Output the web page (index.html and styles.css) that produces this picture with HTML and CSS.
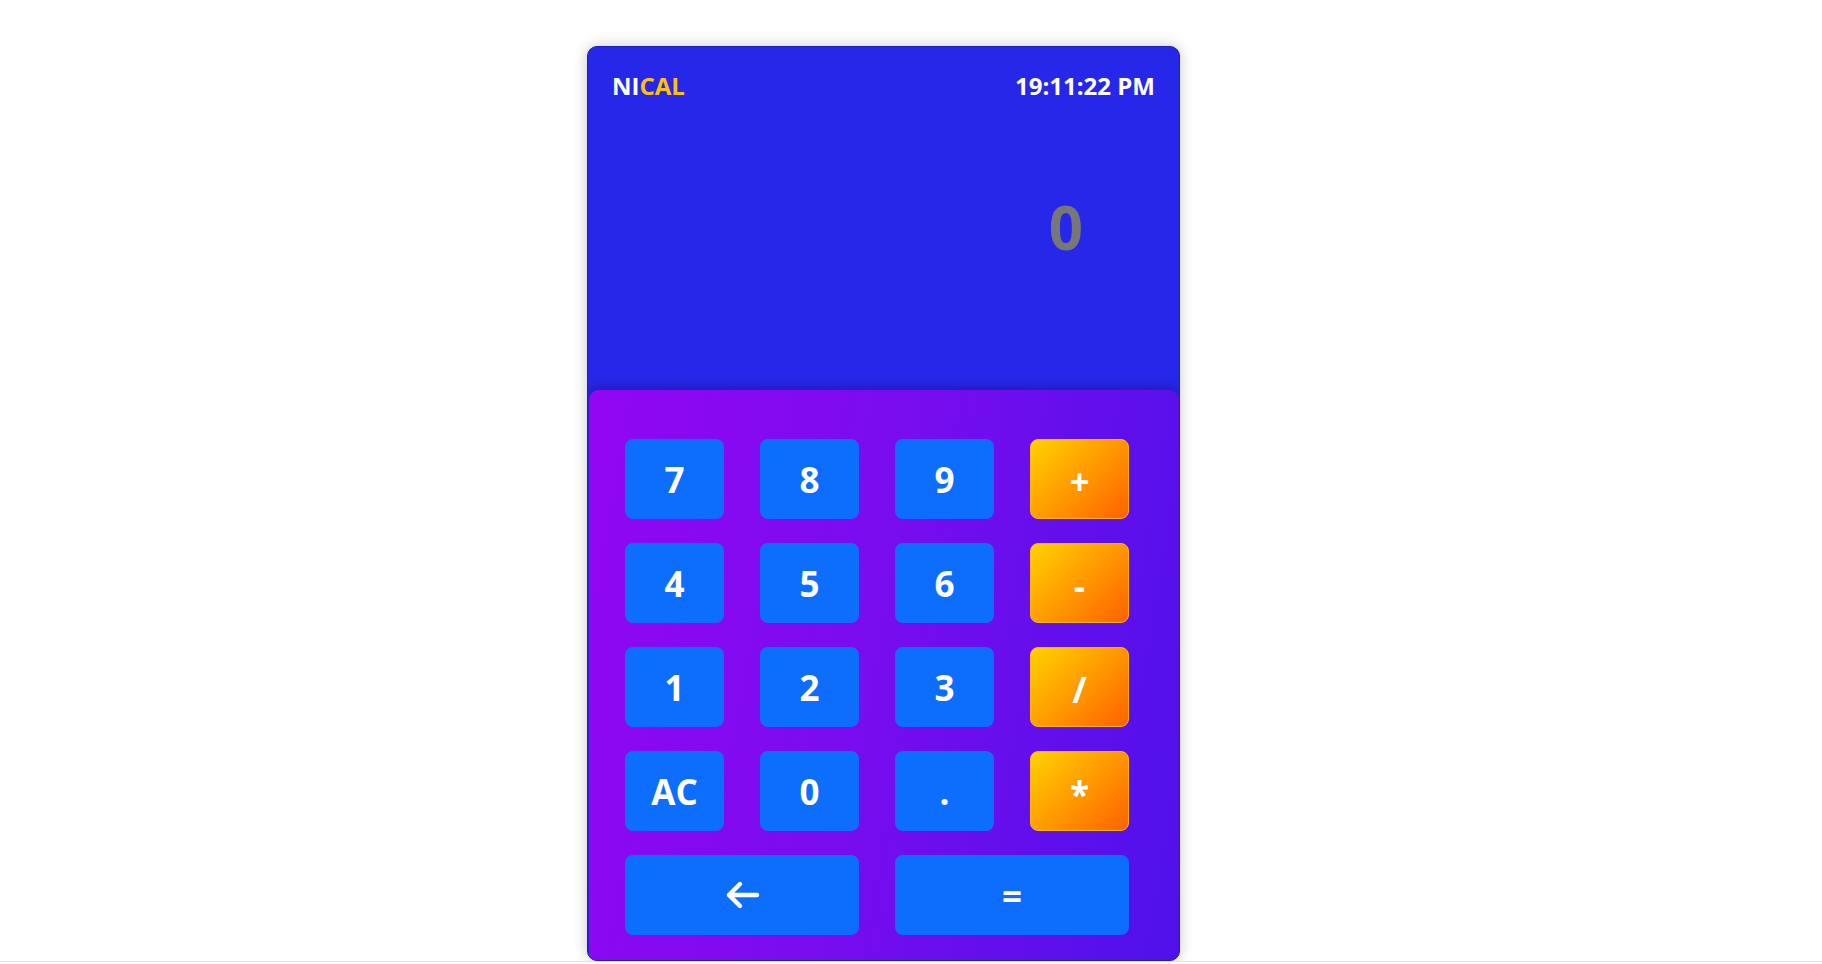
FILE: index.html
```html
<!DOCTYPE html>
<html lang="en">
<head>
<meta charset="utf-8">
<title>NICAL</title>
<link rel="stylesheet" href="styles.css">
</head>
<body>
<div class="page">
  <div class="calc">
    <div class="screen">
      <div class="top">
        <div class="brand">NI<span class="brand-accent">CAL</span></div>
        <div class="time">19:11:22 PM</div>
      </div>
      <div class="result">0</div>
    </div>
    <div class="keypad">
      <button class="key">7</button>
      <button class="key">8</button>
      <button class="key">9</button>
      <button class="key op">+</button>
      <button class="key">4</button>
      <button class="key">5</button>
      <button class="key">6</button>
      <button class="key op">-</button>
      <button class="key">1</button>
      <button class="key">2</button>
      <button class="key">3</button>
      <button class="key op">/</button>
      <button class="key">AC</button>
      <button class="key">0</button>
      <button class="key">.</button>
      <button class="key op">*</button>
      <button class="key wide" aria-label="backspace"><svg class="arrow" width="36" height="30" viewBox="0 0 36 30"><path d="M16 4 L5 15 L16 26 M5 15 H33" fill="none" stroke="#fff" stroke-width="4.4" stroke-linecap="round" stroke-linejoin="round"/></svg></button>
      <button class="key wide">=</button>
    </div>
  </div>
  <div class="rule"></div>
</div>
</body>
</html>
```
FILE: styles.css
```css
* { box-sizing: border-box; }
html, body { margin: 0; padding: 0; background: #fff; }
body { font-family: "Open Sans", "Noto Sans", sans-serif; }
.page { display: flex; flex-direction: column; padding-top: 46px; }
.calc {
  margin-left: 587px;
  width: 593px;
  height: 915px;
  background: #2727e9;
  border: 1px solid #2020b0;
  border-radius: 10px;
  box-shadow: 0 0 14px rgba(0,0,0,0.22);
  display: flex;
  flex-direction: column;
  overflow: hidden;
}
.screen {
  height: 343px;
  display: flex;
  flex-direction: column;
  padding: 22px 24px 0 24px;
}
.top { display: flex; justify-content: space-between; align-items: center; }
.brand, .time { font-weight: 700; font-size: 24px; color: #fff; line-height: 33px; }
.brand-accent { color: #ffc107; }
.result {
  margin-top: 84px;
  align-self: flex-end;
  padding-right: 72px;
  font-weight: 700;
  font-size: 60px;
  line-height: 82px;
  color: #777777;
}
.keypad {
  flex: 1;
  margin-left: 1px;
  border-radius: 10px 10px 0 0;
  background: linear-gradient(100deg, #9306f3 0%, #7a0cef 45%, #4e11ea 100%);
  box-shadow: 0 -3px 10px rgba(20,10,90,0.35);
  padding: 49px 0 0 36px;
  display: grid;
  grid-template-columns: repeat(4, 99px);
  grid-auto-rows: 80px;
  column-gap: 36px;
  row-gap: 24px;
  align-content: start;
}
.key {
  border: none;
  border-radius: 8px;
  background: #0d6efd;
  color: #fff;
  font-family: "Open Sans", "Noto Sans", sans-serif;
  font-weight: 700;
  font-size: 35px;
  padding: 0;
  margin: 0;
  display: flex;
  align-items: center;
  justify-content: center;
}
.key.op {
  background: linear-gradient(135deg, #ffd200 0%, #ff9a00 50%, #ff6200 100%);
  border: 1px solid #ffb400;
  padding-top: 4px;
}
.key.wide { grid-column: span 2; }
.arrow { display: block; }
.rule { height: 1px; background: #e2e2e2; margin-top: 0; }
```
